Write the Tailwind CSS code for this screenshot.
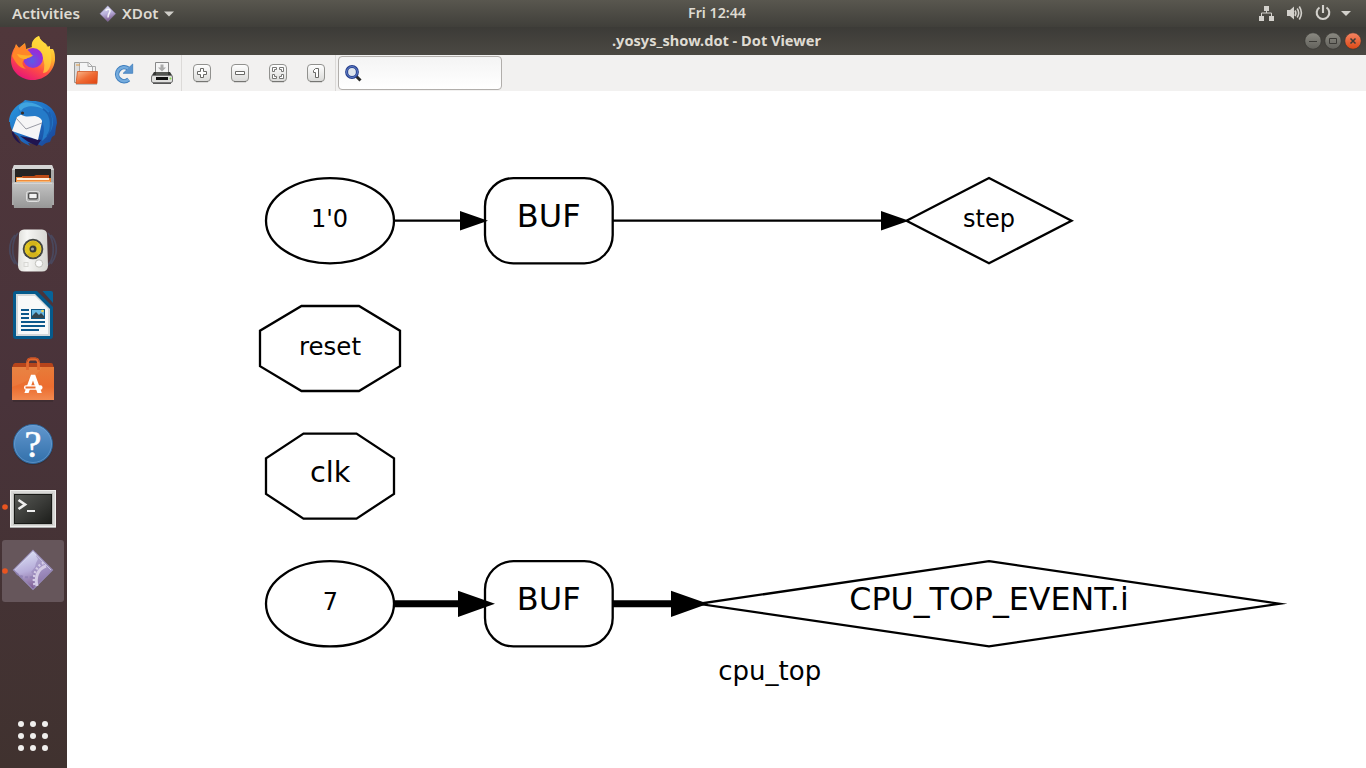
<!DOCTYPE html>
<html lang="en">
<head>
<meta charset="utf-8">
<title>.yosys_show.dot - Dot Viewer</title>
<script src="https://cdn.jsdelivr.net/npm/@tailwindcss/browser@4"></script>
</head>
<body class="w-[1366px] h-[768px] overflow-hidden flex flex-col bg-white font-['Noto_Sans',sans-serif]">
<header class="h-[27px] shrink-0 grid grid-cols-[1fr_auto_1fr] items-center bg-linear-to-b from-[#59574f] to-[#403f3a] text-[#dfdbd2] text-[14px] font-semibold leading-[27px]">
  <div class="flex items-center pl-3">
    <svg width="70" height="27"><text x="0" y="19" fill="#dfdbd2" textLength="68" lengthAdjust="spacingAndGlyphs">Activities</text></svg>
    <svg class="ml-[17px]" width="18" height="18" viewBox="99 4 18 18"><use href="#dia" transform="translate(99.6 4.5) scale(.4)"/><path d="M105.500 9.500q4-2.500 4.500 0c.5 2-2 2.500-2 7" fill="none" stroke="#fff" stroke-width="1.500" opacity=".85"/></svg>
    <svg class="ml-[5px]" width="37" height="27"><text x="0" y="19" fill="#dfdbd2" textLength="36.5" lengthAdjust="spacingAndGlyphs">XDot</text></svg>
    <svg class="ml-[5px]" width="10" height="6"><path d="M0 .5h10L5 5.5z" fill="#d0cec9"/></svg>
  </div>
  <svg width="60" height="27" class="ml-[68px] mr-px"><text x="1" y="18" fill="#dfdbd2" textLength="58" lengthAdjust="spacingAndGlyphs">Fri 12:44</text></svg>
  <svg class="justify-self-end" width="116" height="27" viewBox="1250 0 116 27">
    <g fill="#d3d1cc"><path d="M1264 6h5v5h-5zM1259 16h5v5h-5zM1269 16h5v5h-5z"/><path d="M1261.500 16v-3h10v3M1266.500 10v3" fill="none" stroke="#d3d1cc"/>
    <path d="M1287 10h3l4-3.500v13l-4-3.500h-3z"/></g>
    <g fill="none" stroke="#d3d1cc" stroke-width="1.600"><path d="M1295 10.500q1.700 2.700 0 5.500M1297.200 8.500q3 4.500 0 9M1299.300 6.500q4.200 6.500 0 13"/></g>
    <path d="M1319.500 7.500a6.300 6.300 0 1 0 7 0M1323 5v8" fill="none" stroke="#d3d1cc" stroke-width="2.100"/>
    <path d="M1341 11h10l-5 5z" fill="#d3d1cc"/>
  </svg>
</header>
<div class="flex flex-1 min-h-0">
  <nav class="w-[67px] shrink-0 flex flex-col gap-[2px] pt-px pl-[2px] bg-linear-to-b from-[#50373b] via-[#49333a] to-[#40322f]">
    <svg class="w-[62px] h-[62px] shrink-0" viewBox="2 28 62 62">
      <defs>
        <linearGradient id="ff" x1=".8" y1="0" x2=".25" y2="1"><stop stop-color="#fff44f"/><stop offset=".35" stop-color="#ffb42b"/><stop offset=".65" stop-color="#ff4f42"/><stop offset="1" stop-color="#e5107d"/></linearGradient>
        <radialGradient id="fp" cx=".45" cy=".65"><stop stop-color="#5a5ce5"/><stop offset="1" stop-color="#962ed8"/></radialGradient>
        <linearGradient id="tb" x2="1" y2="1"><stop stop-color="#2b9be0"/><stop offset=".5" stop-color="#1e6fc4"/><stop offset="1" stop-color="#1a3f91"/></linearGradient>
        <linearGradient id="gr" x2="0" y2="1"><stop stop-color="#c4c4c4"/><stop offset="1" stop-color="#979797"/></linearGradient>
        <linearGradient id="sp" x2="1"><stop stop-color="#dededa"/><stop offset=".3" stop-color="#f6f6f4"/><stop offset="1" stop-color="#d5d5d1"/></linearGradient>
        <linearGradient id="or" x2="0" y2="1"><stop stop-color="#e77c39"/><stop offset=".6" stop-color="#ec6d30"/><stop offset="1" stop-color="#f28a50"/></linearGradient>
        <linearGradient id="hp" x2="0" y2="1"><stop stop-color="#6297ce"/><stop offset="1" stop-color="#3270aa"/></linearGradient>
        <linearGradient id="tm" x2="1" y2="1"><stop stop-color="#555753"/><stop offset=".5" stop-color="#3b3c39"/><stop offset="1" stop-color="#1d1e1b"/></linearGradient>
        <linearGradient id="dg" x1=".3" x2=".6" y2="1"><stop stop-color="#dce2f7"/><stop offset=".5" stop-color="#b7add9"/><stop offset="1" stop-color="#765187"/></linearGradient>
        <linearGradient id="bt" x2="0" y2="1"><stop stop-color="#fff"/><stop offset="1" stop-color="#dadad8"/></linearGradient>
        <linearGradient id="fo" x2="1" y2="1"><stop stop-color="#f9b98c"/><stop offset=".5" stop-color="#ef6c35"/><stop offset="1" stop-color="#e24310"/></linearGradient>
        <g id="dia"><path d="M20.500 .8L40 20.500 20.500 40 1 20.500z" fill="url(#dg)" stroke="#9589b5" stroke-width="1.200"/></g>
      </defs>
      <g transform="translate(0 1)">
      <path d="M11 59c0-6 2-10 4-13l1-3 3 4 6-5 1 6 6-2c-1-5 2-9 7-11 1 4 4 6 7 8l1 3 3-1 0 3 3 0c2 3 2 7 2 11-1 11-10 20-22 20S11 71 11 59z" fill="url(#ff)"/>
      <path d="M32 47c-1-5 2-10 7-12 1 4 4 6 7 8 6 6 7 17 3 25-2 3-4 4-6 4 4-11-1-21-11-25z" fill="#ffd93a" opacity=".7"/>
      <circle cx="33" cy="57" r="10" fill="url(#fp)"/>
      <path d="M12 55c1-4 3-7 4-11l3 3 6-4 1 5c2 1 4 3 6 6-1 3-6 2-8 5-3 3-1 6 2 9-8-1-11-8-14-13z" fill="#ff8628"/><path d="M17 53c5 1 9 2 16 1-2 3-5 2-7 4-5 0-8-2-9-5z" fill="#ffaf2a"/>
      </g>
    </svg>
    <svg class="w-[62px] h-[62px] shrink-0" viewBox="2 92 62 62">
      <path d="M9 122c0-9 6-16 14-20l2-2 6 1c14-1 26 8 26 22l-1 4-1 8-3 2-2 5-4 1-4 3-5-2-9-1 2 3-6-3-3-2-3-5c-5-3-8-8-8-14z" fill="url(#tb)"/>
      <path d="M12 130l3 5 6 9c-6-3-10-9-9-14zM20 136l21 4-4 6c-7-3-12-6-17-10z" fill="#20144f"/>
      <path d="M17 117l5-3 20-1 0 9-4 18-26-9z" fill="#f5f5f6"/><path d="M16 118l10 11 16-6" fill="none" stroke="#989aa4" stroke-width="1"/>
      <path d="M20 114c-4-8 2-13 10-12 13 1 23 10 23 20 0 8-5 14-11 19 1-5 3-11 1-17-1-5-3-7-8-8-5 0-9 2-15-2z" fill="#257bc9"/><path d="M21 111c3-6 15-6 22-2-4-5-16-9-22-5-3 2-3 5 0 7z" fill="#40a4df"/>
      <path d="M43 109c8 5 9 14 6 25M49 112c4 7 3 17-2 24" stroke="#174f9c" fill="none" stroke-width="1.500" opacity=".6"/><circle cx="22.500" cy="113" r="1.600" fill="#382d28"/>
    </svg>
    <svg class="w-[62px] h-[62px] shrink-0" viewBox="2 156 62 62">
      <path d="M14 165h38l2 5v35h-2l-1 3H15l-1-3h-2v-35z" fill="#aaa"/><path d="M14 165h38l2 5H12z" fill="#d5d5d5"/><path d="M15 169h36v15H15z" fill="#262423"/>
      <path d="M22 178v-2h12l2-1h13v8H20v-5z" fill="#bd4c16"/><path d="M16 177h6l1 1h28v6H16z" fill="#f08c3b"/><path d="M17 178h32v2H17z" fill="#fff0dc"/><path d="M17 181h33v3H17z" fill="#f6b777"/>
      <path d="M14 182h38l2 1-2 25H14l-2-25z" fill="url(#gr)"/><path d="M14 183.500h38" stroke="#d5d5d5"/><rect x="26.500" y="191.500" width="13" height="10" rx="2" fill="#b4b4b4" stroke="#dfdfdf"/><rect x="28.700" y="193.200" width="8.600" height="5.600" rx="1" fill="#f2f2f2" stroke="#444" stroke-width="1.200"/>
    </svg>
    <svg class="w-[62px] h-[62px] shrink-0" viewBox="2 220 62 62">
      <g fill="none" stroke="#48597e" stroke-width="1.800" opacity=".5"><path d="M18 233c-7 8-7 25 0 32M15 235c-7 8-7 20 0 29M48 233c7 8 7 25 0 32M51 235c7 8 7 20 0 29"/></g>
      <path d="M24 229.500h18q5 .5 5 5l1 31q0 6-6 6H24q-6 0-6-6l1-31q0-4.500 5-5z" fill="url(#sp)"/><circle cx="33" cy="249" r="10.300" fill="#444744"/><circle cx="33" cy="249" r="8" fill="#dfc41e" stroke="#e6c82c"/><path d="M33 249l-6 6a8.500 8.500 0 0 0 12 0zM33 249l-5-6a8 8 0 0 1 10 0z" fill="#c09a13" opacity=".4"/><circle cx="33" cy="249" r="3.500" fill="#383b38"/><circle cx="32.500" cy="249" r="1.600" fill="#9fa19b"/>
      <circle cx="39" cy="263.500" r="3.700" fill="#fafafa" stroke="#c0c0bb"/><rect x="24" y="262.500" width="4" height="4" fill="none" stroke="#d8d8d4"/>
    </svg>
    <svg class="w-[62px] h-[62px] shrink-0" viewBox="2 284 62 62">
      <path d="M16 291h21l16 16v29q0 3-3 3H16q-3 0-3-3v-42q0-3 3-3z" fill="#055a8c"/><path d="M16 294h19l15 15v27H16z" fill="#d4d8da"/><path d="M18 296h17l13 13v25H18z" fill="#f8f9f9"/><path d="M42.500 291h8.500q2 0 2 2v10z" fill="#076398"/>
      <path d="M21 310h8M21 314h8M21 318h8M21 322h24M21 326h24M21 330h18" stroke="#0d588b" stroke-width="2"/><rect x="31" y="309" width="14" height="10" fill="#0b5787"/><rect x="32" y="310" width="12" height="8" fill="#68b8e3"/><path d="M32 318v-2l4-4 3 3 2-2 3 3v2z" fill="#34454e"/><circle cx="42.500" cy="311" r="1.300" fill="#f3d24e"/>
    </svg>
    <svg class="w-[62px] h-[62px] shrink-0" viewBox="2 348 62 62">
      <path d="M13 365q0-1 2-2h36q2 0 2 2l1 3H12z" fill="#b6441b"/><path d="M12 367h42v33H12z" fill="url(#or)"/><path d="M12 367h30q-6 12-30 20z" fill="#f0a067" opacity=".2"/>
      <path d="M27.500 370v-6q0-5 3-5h5q3 0 3 5v6" fill="none" stroke="#e36a31" stroke-width="2.800"/><path d="M27 362q0-4 4-4h4q4 0 4 4" fill="none" stroke="#c24a20"/>
      <path d="M31 374.700h4.200l6.600 18.300h-4.400l-4.400-12.500-4.400 12.500h-4.200z" fill="#fff"/><rect x="24" y="385.300" width="18.500" height="4.400" rx="2" fill="#fff"/><path d="M25.500 387.500h10" stroke="#ec6d30" stroke-width="2"/><path d="M13 401h40" stroke="#36282a" stroke-width="1.500" opacity=".6"/>
    </svg>
    <svg class="w-[62px] h-[62px] shrink-0" viewBox="2 412 62 62">
      <circle cx="33" cy="445" r="20" fill="#2c272c" opacity=".5"/><circle cx="33" cy="444" r="19.500" fill="url(#hp)" stroke="#2d659b"/><circle cx="33" cy="444" r="18.500" fill="none" stroke="#79aad9" opacity=".5"/>
      <text x="33" y="457" text-anchor="middle" font-family="Liberation Serif, serif" font-size="38" fill="#fff" stroke="#fff" stroke-width=".6">?</text>
    </svg>
    <svg class="w-[64px] h-[62px] -ml-[2px] shrink-0" viewBox="0 476 64 62">
      <circle cx="5" cy="507" r="2.800" fill="#e95420"/><path d="M10 490h46v38H10z" fill="#aaa"/><rect x="10.500" y="490.500" width="45" height="36" fill="#d8d8d6" stroke="#f0f0ee"/><path d="M13 493h40v32H13z" fill="#bcbdba"/><path d="M14 494h38v30H14z" fill="#191a17"/><path d="M15 495h36v28H15z" fill="url(#tm)"/><path d="M18.500 500l6.500 4.500-6.500 4.500" fill="none" stroke="#eee" stroke-width="2.700"/><path d="M27 511h8" stroke="#eee" stroke-width="2"/>
    </svg>
    <svg class="w-[64px] h-[62px] -ml-[2px] shrink-0" viewBox="0 540 64 62">
      <rect x="2" y="540" width="62" height="62" rx="3" fill="#66565b"/><circle cx="5" cy="571" r="2.800" fill="#e95420"/>
      <use href="#dia" transform="translate(12.500 549.500)"/>
      <path d="M35 552l17 18-17 18-2-1 2-4-2-1 1-3-2-1 1-4-2-2 4-5 1-4 2-4-2-3 1-3z" fill="#9484b6" opacity=".55"/><path d="M37 586c-2-8 0-17 9-20" fill="none" stroke="#d4cbe5" stroke-width="3"/><path d="M34.500 585c-2-9 1-19 9-22" fill="none" stroke="#d4cbe5" stroke-width="2.500" stroke-dasharray="2 2"/><path d="M16 573c5 4 9 5 17 4" stroke="#8c7eb0" stroke-width="2" stroke-dasharray="3 2" fill="none" opacity=".7"/><path d="M14.500 570L33 551.500 51 570" fill="none" stroke="#e4e7f6" opacity=".65"/>
    </svg>
    <svg class="w-[62px] h-[62px] shrink-0 mt-auto mb-[1px]" viewBox="2 705 62 62"><g fill="#f0efed"><circle cx="21" cy="724" r="3"/><circle cx="33" cy="724" r="3"/><circle cx="45" cy="724" r="3"/><circle cx="21" cy="736" r="3"/><circle cx="33" cy="736" r="3"/><circle cx="45" cy="736" r="3"/><circle cx="21" cy="748" r="3"/><circle cx="33" cy="748" r="3"/><circle cx="45" cy="748" r="3"/></g></svg>
  </nav>
  <main class="flex-1 min-w-0 flex flex-col">
    <div class="h-[28px] shrink-0 flex items-center justify-end bg-linear-to-b from-[#3c3b37] to-[#4b4943]">
      <svg width="211" height="28" class="mr-[482px]"><text x="1" y="18.500" fill="#dfdbd2" font-size="14" font-weight="700" textLength="209" lengthAdjust="spacingAndGlyphs">.yosys_show.dot - Dot Viewer</text></svg>
      <svg width="62" height="28" viewBox="1304 27 62 28">
        <defs><linearGradient id="wb" x2="0" y2="1"><stop stop-color="#8b8a82"/><stop offset="1" stop-color="#62615b"/></linearGradient><linearGradient id="wc" x2="0" y2="1"><stop stop-color="#f58563"/><stop offset="1" stop-color="#dd4815"/></linearGradient></defs>
        <g stroke="#33322f" stroke-width=".6"><circle cx="1313" cy="41" r="8.200" fill="url(#wb)"/><circle cx="1333" cy="41" r="8.200" fill="url(#wb)"/><circle cx="1353" cy="41" r="8.200" fill="url(#wc)"/></g>
        <g fill="none" stroke="#3c3b37"><path d="M1309 41.500h8"/><path d="M1329.500 38.500h7v5h-7z"/><path d="M1350.500 38.500l5 5M1355.500 38.500l-5 5" stroke-width="1.500"/></g>
      </svg>
    </div>
    <div class="h-[36px] shrink-0 flex items-center bg-[#f2f1f0]">
      <svg width="269" height="36" viewBox="67 55 269 36" class="shrink-0">
        <path d="M74.500 62.500h8v20h-8z" fill="#ddd" stroke="#9b9b98"/><path d="M79.500 62.500h9l4 4v15h-13z" fill="#f5f5f5" stroke="#aaa"/><path d="M88 62.500v4h7.500v8" fill="none" stroke="#aaa"/><path d="M76 65h4" stroke="#e39c43"/><path d="M77.500 71.500h20l-.5 12H76z" fill="url(#fo)" stroke="#d35523" stroke-width=".8"/><path d="M76 84.500h21" stroke="#bbb"/>
        <g transform="translate(-.6 0)"><path d="M129.300 79.500a7 7 0 1 1-.5-11" fill="none" stroke="#3f7ebd" stroke-width="4.500"/><path d="M133.300 64v9.300h-9.500z" fill="#5b95cf" stroke="#3f7ebd" stroke-width=".8"/><path d="M129.300 79.500a7 7 0 1 1-.5-11" fill="none" stroke="#74abdd" stroke-width="2.600"/></g>
        <path d="M155.500 62.500h13v11h-13z" fill="#f5f5f5" stroke="#888"/><path d="M160.500 64.500h3v3h2.500l-4 4-4-4h2.500z" fill="#aaa"/><path d="M154 72h16l2.500 4h-21z" fill="#363835"/><path d="M156 72h12v4h-12z" fill="#555753"/><rect x="151.500" y="75.500" width="21" height="7" rx="1.500" fill="#dfdfdd" stroke="#777"/><path d="M156 77h12v3h-12z" fill="#111"/><path d="M153 83.500h18" stroke="#555"/><circle cx="170.500" cy="78.500" r="1" fill="#86dc4b"/>
        <path d="M181.500 55v36M335.500 55v36" stroke="#dcdad8"/>
        <g fill="url(#bt)" stroke="#91918e"><rect x="193.500" y="64.500" width="17" height="17" rx="3.500"/><rect x="231.500" y="64.500" width="17" height="17" rx="3.500"/><rect x="269.500" y="64.500" width="17" height="17" rx="3.500"/><rect x="307.500" y="64.500" width="17" height="17" rx="3.500"/></g>
        <path d="M196 81.700h12M234 81.700h12M272 81.700h12M310 81.700h12" stroke="#6f6f6c"/>
        <g fill="#fff" stroke="#696966"><path d="M200.500 68.500h3v3h3v3h-3v3h-3v-3h-3v-3h3z"/><path d="M235.500 71.500h9v3h-9z"/><path d="M272.500 67.500h4v2h-2v2h-2zM283.500 67.500h-4v2h2v2h2zM272.500 78.500h4v-2h-2v-2h-2zM283.500 78.500h-4v-2h2v-2h2z" stroke-width=".9"/><path d="M315.500 68.500h3v9h-3v-5h-2v-2z" /></g>
      </svg>
      <div class="ml-[2px] w-[164px] h-[34px] rounded-[4px] border border-[#b1aeab] bg-linear-to-b from-[#f4f4f4] to-white flex items-center pl-[5px]">
        <svg width="20" height="20" viewBox="344 63 20 20"><path d="M356 76l4.500 4.500" stroke="#292929" stroke-width="3"/><circle cx="352" cy="72" r="5.400" fill="#dfe6ee" stroke="#263f8c" stroke-width="3"/><circle cx="352" cy="72" r="5.400" fill="none" stroke="#6382cc" stroke-width="1"/></svg>
      </div>
    </div>
    <svg class="flex-1 min-h-0" width="1299" height="677" viewBox="67 91 1299 677">
      <rect x="67" y="91" width="1299" height="677" fill="#fff"/>
      <g fill="none" stroke="#000" stroke-width="2.300" stroke-miterlimit="10">
        <ellipse cx="330" cy="220.700" rx="64" ry="42.600"/><rect x="485" y="178.100" width="127.700" height="85.200" rx="28.400"/><path d="M989 178.100L1071.500 220.700 989 263.300 906.500 220.700zM394 220.700h67M612.700 220.700H882"/>
        <path d="M400 330.700V366.200L359 391H301.500L260 366.200V330.700L301.500 306H359zM394 458.400V493.900L356.500 518.600H303.500L266 493.900V458.400L303.500 433.600H356.500z"/>
        <ellipse cx="330" cy="603.800" rx="64" ry="42.600"/><rect x="485" y="561.200" width="127.700" height="85.200" rx="28.400"/><path d="M989 561.200L1279.500 603.800 989 646.400 698.500 603.800z"/>
        <path d="M394 603.800h65M612.700 603.800H672" stroke-width="6.900"/>
      </g>
      <path d="M460 210.900L488 220.700 460 230.500zM881 210.900L909 220.700 881 230.500zM458 590.700L495 603.800 458 616.900zM671 590.700L708 603.800 671 616.900z"/>
      <g font-family="DejaVu Sans, sans-serif" text-anchor="middle" font-size="24">
        <text x="329.500" y="227">1'0</text><text x="548.700" y="227" font-size="32">BUF</text><text x="989" y="227">step</text><text x="330" y="355" textLength="62" lengthAdjust="spacingAndGlyphs">reset</text><text x="330.300" y="482" font-size="28" textLength="40.500" lengthAdjust="spacingAndGlyphs">clk</text><text x="330.300" y="610">7</text><text x="548.700" y="610" font-size="32">BUF</text><text x="989" y="610" font-size="32" textLength="279.500" lengthAdjust="spacingAndGlyphs">CPU_TOP_EVENT.i</text><text x="769.700" y="680" font-size="26">cpu_top</text>
      </g>
    </svg>
  </main>
</div>
</body>
</html>
